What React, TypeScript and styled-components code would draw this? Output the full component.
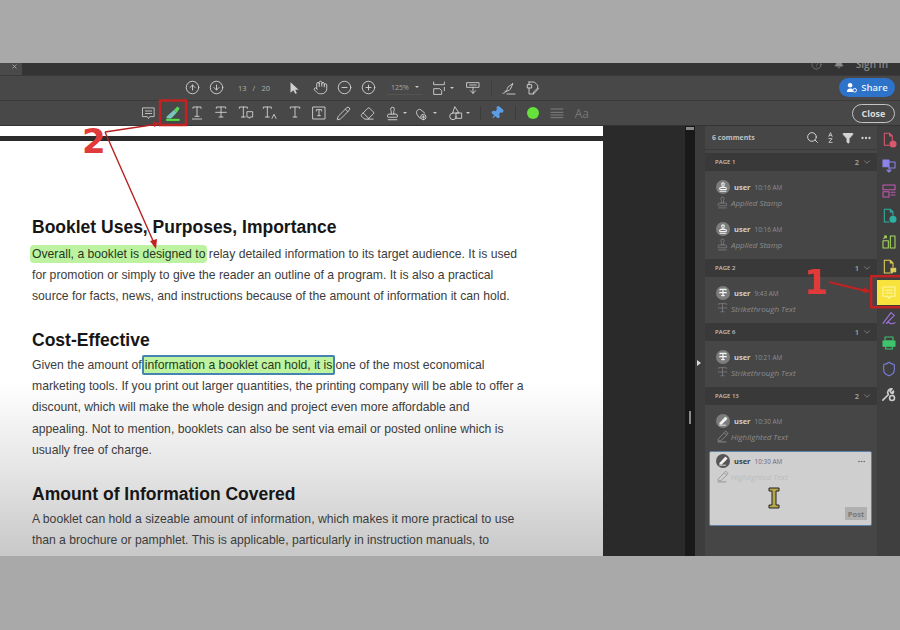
import React from "react";
import styled, { createGlobalStyle } from "styled-components";
import {
  Bell,
  ChevronDown,
  CircleArrowDown,
  CircleArrowUp,
  CircleHelp,
  CircleMinus,
  CirclePlus,
  Ellipsis,
  Eraser,
  Funnel,
  Hand,
  Pencil,
  Pin,
  Search,
  Shield,
  Stamp,
  X,
} from "lucide-react";

const GlobalStyle = createGlobalStyle`
  html, body {
    margin: 0;
    padding: 0;
    background: #a9a9a9;
  }
  body {
    width: 900px;
    height: 630px;
    overflow: hidden;
    font-family: "Open Sans", "Liberation Sans", sans-serif;
  }
`;

const Page = styled.div`
  position: relative;
  width: 900px;
  height: 630px;
  padding: 63px 0 74px;
  box-sizing: border-box;
  background: #a9a9a9;
`;

const Window = styled.div`
  height: 493px;
  display: flex;
  flex-direction: column;
  background: #444;
  overflow: hidden;
`;

const TitleBar = styled.div`
  height: 12px;
  background: #343434;
  display: flex;
  align-items: flex-start;
  flex-shrink: 0;
  color: #8a8a8a;
`;

const TabStub = styled.div`
  width: 22px;
  height: 12px;
  background: #4a4a4a;
  color: #ccc;
  display: flex;
  justify-content: flex-end;
  padding: 0 4px 0 0;
  box-sizing: border-box;
`;

const TitleRight = styled.div`
  margin-left: auto;
  margin-top: -8px;
  display: flex;
  align-items: center;
  gap: 12px;
  padding-right: 12px;
  font-size: 10px;
  font-weight: 600;
  height: 18px;
`;

const ToolRow = styled.div<{ $left: number; $lift?: boolean }>`
  height: 25px;
  flex-shrink: 0;
  display: flex;
  align-items: center;
  padding-left: ${(p) => p.$left}px;
  padding-right: 5px;
  padding-bottom: ${(p) => (p.$lift ? 1 : 0)}px;
  background: #484848;
  border-top: 1px solid #3a3a3a;
  box-sizing: border-box;
  color: #d8d8d8;
`;

const Slot = styled.div<{ $w?: number }>`
  width: ${(p) => p.$w ?? 24.4}px;
  height: 20px;
  flex-shrink: 0;
  display: flex;
  align-items: center;
  justify-content: center;
`;

const Caret = styled.span`
  width: 0;
  height: 0;
  margin-left: 3px;
  border-left: 2px solid transparent;
  border-right: 2px solid transparent;
  border-top: 2px solid #c8c8c8;
`;

const PageField = styled.div`
  width: 52px;
  height: 20px;
  flex-shrink: 0;
  display: flex;
  align-items: center;
  justify-content: center;
  gap: 6px;
  font-size: 7.5px;
  color: #b0b0b0;
`;

const ZoomField = styled.div`
  width: 36px;
  height: 15px;
  flex-shrink: 0;
  margin: 0 4px 0 7px;
  padding: 0 4px;
  box-sizing: border-box;
  display: flex;
  align-items: center;
  justify-content: space-between;
  font-size: 7px;
  color: #a6a6a6;
  border-bottom: 1px solid #545454;
`;

const Divider = styled.span<{ $l: number; $r: number }>`
  width: 1px;
  height: 14px;
  flex-shrink: 0;
  margin: 0 ${(p) => p.$r}px 0 ${(p) => p.$l}px;
  background: #3c3c3c;
`;

const ShareButton = styled.div`
  margin-left: auto;
  width: 56px;
  height: 19px;
  border-radius: 10px;
  background: #2d73c9;
  color: #e8f0fa;
  font-size: 9.5px;
  font-weight: 600;
  display: flex;
  align-items: center;
  justify-content: center;
  gap: 4px;
`;

const CloseButton = styled.div`
  margin-left: auto;
  width: 43px;
  height: 19px;
  border: 1px solid #c4c4c4;
  border-radius: 10px;
  box-sizing: border-box;
  color: #dcdcdc;
  font-size: 9px;
  font-weight: 700;
  display: flex;
  align-items: center;
  justify-content: center;
`;

const GreenDot = styled.span`
  width: 12px;
  height: 12px;
  border-radius: 50%;
  background: #66e03a;
`;

const AaLabel = styled.span`
  font-size: 12px;
  color: #777;
`;

const Main = styled.div`
  flex: 1;
  min-height: 0;
  display: flex;
  border-top: 1px solid #333;
`;

const Doc = styled.div`
  width: 603px;
  flex-shrink: 0;
  padding: 10px 0 0;
  box-sizing: border-box;
  overflow: hidden;
  font-family: "Liberation Sans", Arial, sans-serif;
  background: linear-gradient(
    to bottom,
    #fff 0,
    #fff 255px,
    #e8e8e8 335px,
    #c8c8c8 430px
  );
`;

const PageBreak = styled.div`
  height: 5px;
  background: #2b2b2b;
  margin-bottom: 76px;
`;

const DocBody = styled.div`
  padding-left: 32px;
`;

const Heading = styled.h2<{ $top?: number; $below?: number }>`
  margin: ${(p) => p.$top ?? 0}px 0 ${(p) => p.$below ?? 4}px;
  font-size: 17.5px;
  line-height: 21px;
  font-weight: 700;
  color: #161616;
  white-space: nowrap;
`;

const BodyLine = styled.p`
  margin: 0;
  height: 21.1px;
  font-size: 12.2px;
  line-height: 21px;
  color: #3c3c3c;
  white-space: nowrap;
`;

const Mark = styled.span`
  background: #bdf3a0;
  color: #26381c;
  border-radius: 4px;
  padding: 2px;
  margin: 0 -2px;
`;

const SelectedMark = styled.span`
  background: #c0f3a0;
  color: #26381c;
  border: 2px solid #4484b4;
  border-radius: 2px;
  padding: 1px;
`;

const Gutter = styled.div`
  width: 82px;
  flex-shrink: 0;
  background: #2a2a2a;
`;

const ScrollTrack = styled.div`
  width: 10px;
  flex-shrink: 0;
  background: #191919;
  display: flex;
  flex-direction: column;
  align-items: center;
`;

const ScrollThumb = styled.div`
  width: 8px;
  height: 3px;
  margin-top: 1px;
  background: #888;
`;

const ScrollMark = styled.div`
  width: 2px;
  height: 13px;
  margin-top: 281px;
  background: #8a8a8a;
`;

const PanelGap = styled.div`
  width: 10px;
  flex-shrink: 0;
  background: #3d3d3d;
  position: relative;
`;

const CollapseArrow = styled.span`
  position: absolute;
  left: 2px;
  top: 234px;
  width: 0;
  height: 0;
  border-top: 3px solid transparent;
  border-bottom: 3px solid transparent;
  border-left: 4px solid #d8d8d8;
`;

const Panel = styled.div`
  width: 172px;
  flex-shrink: 0;
  box-sizing: border-box;
  background: #464646;
`;

const PanelHead = styled.div`
  height: 24px;
  display: flex;
  align-items: center;
  padding: 0 2px 0 7px;
  color: #d4d4d4;
  border-bottom: 1px solid #3a3a3a;
  box-sizing: border-box;
`;

const PanelTitle = styled.span`
  font-size: 7px;
  font-weight: 700;
  color: #c0c0c0;
  margin-right: auto;
`;

const HeadIcon = styled.span`
  width: 18px;
  display: flex;
  justify-content: center;
`;

const Section = styled.div<{ $first?: boolean }>`
  height: 18px;
  margin-top: ${(p) => (p.$first ? 3 : 4)}px;
  background: #393939;
  display: flex;
  align-items: center;
  padding: 0 5px 0 10px;
  font-size: 6px;
  font-weight: 600;
  color: #c2c2c2;
`;

const Count = styled.span`
  margin-left: auto;
  margin-right: 3px;
  font-size: 7.5px;
  color: #a8a8a8;
`;

const Item = styled.div`
  height: 42px;
  padding: 7px 0 0 11px;
  box-sizing: border-box;
`;

const ItemTop = styled.div`
  display: flex;
  align-items: center;
  height: 18px;
  gap: 4px;
`;

const Avatar = styled.span<{ $dark?: boolean }>`
  width: 14px;
  height: 14px;
  border-radius: 50%;
  background: ${(p) => (p.$dark ? "#555" : "#7c7c7c")};
  color: #f4f4f4;
  display: flex;
  align-items: center;
  justify-content: center;
  flex-shrink: 0;
`;

const User = styled.span<{ $dark?: boolean }>`
  font-size: 7.5px;
  font-weight: 700;
  color: ${(p) => (p.$dark ? "#3c3c3c" : "#cfcfcf")};
`;

const Time = styled.span<{ $dark?: boolean }>`
  font-size: 6.4px;
  color: ${(p) => (p.$dark ? "#6a6a88" : "#8e8e8e")};
`;

const ItemBody = styled.div<{ $dark?: boolean }>`
  display: flex;
  align-items: center;
  height: 14px;
  margin-top: -1px;
  gap: 2px;
  color: ${(p) => (p.$dark ? "#9a9a9a" : "#858585")};
`;

const Summary = styled.span<{ $dark?: boolean }>`
  font-size: 8px;
  font-style: italic;
  color: ${(p) => (p.$dark ? "#bcbcbc" : "#8c8c8c")};
`;

const ActiveCard = styled.div`
  position: relative;
  height: 75px;
  margin: 4px 5px 0 4px;
  padding: 0 0 0 6px;
  box-sizing: border-box;
  background: #cfcfcf;
  border: 1px solid #5f83a8;
  border-radius: 2px;
`;

const CardMenu = styled.span`
  margin-left: auto;
  margin-right: 5px;
  color: #666;
  display: flex;
`;

const PostButton = styled.span`
  position: absolute;
  right: 4px;
  bottom: 5px;
  width: 22px;
  height: 13px;
  background: #b0b0b0;
  color: #787878;
  font-size: 7.5px;
  font-weight: 700;
  display: flex;
  align-items: center;
  justify-content: center;
`;

const Cursor = styled.svg`
  position: absolute;
  left: 58px;
  top: 35px;
`;

const Rail = styled.div`
  flex: 1;
  display: flex;
  flex-direction: column;
  align-items: center;
  padding-top: 1.5px;
  background: #3f3f3f;
`;

const RailSlot = styled.div<{ $active?: boolean }>`
  width: 100%;
  height: 25.4px;
  flex-shrink: 0;
  display: flex;
  align-items: center;
  justify-content: center;
  background: ${(p) => (p.$active ? "#f7e33c" : "transparent")};
`;

const Overlay = styled.svg`
  position: absolute;
  inset: 0;
  pointer-events: none;
`;

const Callout = styled.span<{ $x: number; $y: number }>`
  position: absolute;
  left: ${(p) => p.$x}px;
  top: ${(p) => p.$y}px;
  font-family: "DejaVu Sans", "Liberation Sans", sans-serif;
  font-size: 34px;
  line-height: 34px;
  font-weight: 700;
  color: #e03a3a;
`;

const Glyph = ({
  size = 16,
  color = "currentColor",
  sw = 1.3,
  children,
}: {
  size?: number;
  color?: string;
  sw?: number;
  children: React.ReactNode;
}) => (
  <svg
    width={size}
    height={size}
    viewBox="0 0 24 24"
    fill="none"
    stroke={color}
    strokeWidth={sw}
    strokeLinecap="round"
    strokeLinejoin="round"
  >
    {children}
  </svg>
);

const tBar = "M5 5V3h14v2M12 3v15M9 18h6";

const HighlighterIcon = () => (
  <svg width="17" height="17" viewBox="0 0 24 24">
    <path d="M3 17 14 7l4 4-8 8H5z" fill="#79c4bc" />
    <path d="M14 7l5-5 3 3-4 6z" fill="#58d85a" />
    <rect x="3" y="19.5" width="19" height="3" fill="#55dd44" />
  </svg>
);

const SmallHighlighter = ({ size = 10, fill }: { size?: number; fill?: boolean }) => (
  <svg width={size} height={size} viewBox="0 0 24 24" fill={fill ? "currentColor" : "none"} stroke="currentColor" strokeWidth={fill ? 1 : 1.8} strokeLinejoin="round">
    <path d="M4 17 15 5l5 4L9 20H4zM15 5l3-3 4 4-2 3" />
    <path d="M3 22h16" fill="none" strokeWidth="2" />
  </svg>
);

const StrikeGlyph = ({ size = 15, sw = 1.3 }: { size?: number; sw?: number }) => (
  <Glyph size={size} sw={sw}>
    <path d={tBar} />
    <path d="M4 11h16" />
  </Glyph>
);

const Arrow = () => (
  <svg width="14" height="16" viewBox="0 0 24 24" fill="#d0d0d0">
    <path d="M6 2v18l5-4 3 6 3-1-3-6h6z" />
  </svg>
);

type Entry = { page?: string; count?: number; kind: "stamp" | "strike" | "high"; time: string; text: string };

const entries: Entry[] = [
  { page: "PAGE 1", count: 2, kind: "stamp", time: "10:16 AM", text: "Applied Stamp" },
  { kind: "stamp", time: "10:16 AM", text: "Applied Stamp" },
  { page: "PAGE 2", count: 1, kind: "strike", time: "9:43 AM", text: "Strikethrough Text" },
  { page: "PAGE 6", count: 1, kind: "strike", time: "10:21 AM", text: "Strikethrough Text" },
  { page: "PAGE 13", count: 2, kind: "high", time: "10:30 AM", text: "Highlighted Text" },
];

const KindIcon = ({ kind, size, bold }: { kind: Entry["kind"]; size: number; bold?: boolean }) => {
  if (kind === "stamp") return <Stamp size={size} strokeWidth={bold ? 2.6 : 1.4} />;
  if (kind === "strike") return <StrikeGlyph size={size} sw={bold ? 3 : 1.3} />;
  return <SmallHighlighter size={size} fill={bold} />;
};

const CommentItem = ({ e }: { e: Entry }) => (
  <Item>
    <ItemTop>
      <Avatar>
        <KindIcon kind={e.kind} size={10} bold />
      </Avatar>
      <User>user</User>
      <Time>{e.time}</Time>
    </ItemTop>
    <ItemBody>
      <KindIcon kind={e.kind} size={13} />
      <Summary>{e.text}</Summary>
    </ItemBody>
  </Item>
);

const railIcons: { color: string; active?: boolean; node: React.ReactNode }[] = [
  {
    color: "#d9596f",
    node: (
      <>
        <path d="M5 2h8l4 4v6M5 2v18h7M13 2v4h4" />
        <circle cx="18" cy="18" r="4.5" fill="#d9596f" />
      </>
    ),
  },
  {
    color: "#8b84ea",
    node: (
      <>
        <path d="M3 3h9v10H3z" fill="#8b84ea" />
        <path d="M12 6h9v9h-9M12 13v8M9 18l3 3 3-3" />
      </>
    ),
  },
  { color: "#c25ab4", node: <path d="M3 3h18v7H3zM3 13h9v8H3zM15 14h6M15 18h6" /> },
  {
    color: "#2fb0a4",
    node: (
      <>
        <path d="M5 2h9l4 4v5M5 2v19h7M14 2v4h4" />
        <circle cx="18" cy="17" r="4.5" fill="#2fb0a4" />
      </>
    ),
  },
  { color: "#a5d85f", node: <path d="M3 10h8v11H3zM14 3h7v18h-7zM4 7l4-4M8 3H5M8 3v3" /> },
  {
    color: "#e2cf58",
    node: (
      <>
        <path d="M5 2h9l4 4v6M5 2v19h8M14 2v4h4" />
        <path d="M15 14h7v5h-4l-2 2h-1z" fill="#e2cf58" />
      </>
    ),
  },
  { color: "#fff6a8", active: true, node: <path d="M3 3h18v14h-7l-2 3-2-3H3zM7 8h10M7 12h10" /> },
  { color: "#a276e6", node: <path d="M3 20 15 4l5 4L8 20c3-2 5-1 6 0s3 1 7-1" /> },
  {
    color: "#3fc46c",
    node: (
      <>
        <path d="M6 3h12v6H6z" />
        <path d="M3 9h18v8H3z" fill="#3fc46c" />
        <path d="M7 14h10v7H7z" />
      </>
    ),
  },
];

const App = () => (
  <Page>
    <GlobalStyle />
    <Window>
      <TitleBar>
        <TabStub><X size={7} strokeWidth={2} /></TabStub>
        <TitleRight>
          <CircleHelp size={11} strokeWidth={1.4} />
          <Bell size={10} fill="#8a8a8a" />
          <span>Sign In</span>
        </TitleRight>
      </TitleBar>

      <ToolRow $left={180} $lift>
        <Slot $w={24}><CircleArrowUp size={15} strokeWidth={1.4} /></Slot>
        <Slot $w={24}><CircleArrowDown size={15} strokeWidth={1.4} /></Slot>
        <PageField><span>13</span><span>/</span><span>20</span></PageField>
        <Slot $w={28}><Arrow /></Slot>
        <Slot $w={24}><Hand size={15} strokeWidth={1.4} /></Slot>
        <Slot $w={24}><CircleMinus size={15} strokeWidth={1.4} /></Slot>
        <Slot $w={24}><CirclePlus size={15} strokeWidth={1.4} /></Slot>
        <ZoomField><span>125%</span><Caret /></ZoomField>
        <Slot $w={30}>
          <Glyph size={16}>
            <path d="M4 3v4h16V3M4 21v-8h9l3 3v5zM20 11v5" />
          </Glyph>
          <Caret />
        </Slot>
        <Slot $w={32}>
          <Glyph size={16}>
            <path d="M3 4h18v7H3zM12 11v9M8 16l4 4 4-4M7 7.5h10" />
          </Glyph>
        </Slot>
        <Divider $l={2} $r={5} />
        <Slot $w={24}>
          <Glyph size={16}>
            <path d="M3 20c4 0 6-4 7-9l8-6-4 9c-2 2-5 3-8 3M9 21h12" />
          </Glyph>
        </Slot>
        <Slot $w={24}>
          <Glyph size={16}>
            <path d="M6 3h8l5 5v3M6 3v4M4 7h6v5H4zM6 12v9h6M20 13l-6 7-2 1 1-3 6-6z" />
          </Glyph>
        </Slot>
        <ShareButton>
          <svg width="11" height="11" viewBox="0 0 24 24" fill="#fff">
            <circle cx="9" cy="7" r="5" />
            <path d="M2 22c0-6 3-8 7-8s5 1 6 3v5z" />
            <circle cx="19" cy="18" r="4" fill="none" stroke="#fff" strokeWidth="2" />
          </svg>
          Share
        </ShareButton>
      </ToolRow>

      <ToolRow $left={136}>
        <Slot>
          <Glyph size={15}>
            <path d="M3 3h18v14h-7l-2 3-2-3H3zM7 8h10M7 12h10" />
          </Glyph>
        </Slot>
        <Slot><HighlighterIcon /></Slot>
        <Slot>
          <Glyph>
            <path d="M6 5V3h12v2M12 3v14M9 17h6M5 21h14" />
          </Glyph>
        </Slot>
        <Slot><StrikeGlyph size={16} /></Slot>
        <Slot>
          <Glyph>
            <path d="M2 5V3h12v2M8 3v15M5 18h6M14 10h8v8h-4l-1 2-1-2h-2z" />
          </Glyph>
        </Slot>
        <Slot>
          <Glyph>
            <path d="M2 5V3h12v2M8 3v15M5 18h6M15 20l3-6 3 6" />
          </Glyph>
        </Slot>
        <Slot><Glyph><path d={tBar} /></Glyph></Slot>
        <Slot>
          <Glyph>
            <path d="M3 3h18v18H3zM8 9V7h8v2M12 7v9M10 16h4" />
          </Glyph>
        </Slot>
        <Slot><Pencil size={15} strokeWidth={1.4} /></Slot>
        <Slot><Eraser size={15} strokeWidth={1.4} /></Slot>
        <Slot $w={32}><Stamp size={15} strokeWidth={1.4} /><Caret /></Slot>
        <Slot $w={28}>
          <Glyph>
            <path d="M9 20 5 15c-3-4 0-10 5-8l6 5M14 22a4 4 0 1 0 0-8 4 4 0 0 0 0 8zM14 16v4M12 18h4" />
          </Glyph>
          <Caret />
        </Slot>
        <Slot $w={38}>
          <Glyph>
            <path d="M12 3l6 9H9zM9 12a5 5 0 1 0 5 5M14 12h8v8h-8z" />
          </Glyph>
          <Caret />
        </Slot>
        <Divider $l={2} $r={4} />
        <Slot $w={24}><Pin size={14} fill="#5b9ee6" color="#5b9ee6" style={{ transform: "rotate(40deg)" }} /></Slot>
        <Divider $l={6} $r={6} />
        <Slot $w={22}><GreenDot /></Slot>
        <Slot $w={26}>
          <Glyph color="#888">
            <path d="M3 6h18M3 11h18M3 15h18M3 19h18" />
          </Glyph>
        </Slot>
        <Slot $w={24}><AaLabel>Aa</AaLabel></Slot>
        <CloseButton>Close</CloseButton>
      </ToolRow>

      <Main>
        <Doc>
          <PageBreak />
          <DocBody>
            <Heading $below={6}>Booklet Uses, Purposes, Importance</Heading>
            <BodyLine>
              <Mark>Overall, a booklet is designed to</Mark> relay detailed information to its target audience. It is used
            </BodyLine>
            <BodyLine>for promotion or simply to give the reader an outline of a program. It is also a practical</BodyLine>
            <BodyLine>source for facts, news, and instructions because of the amount of information it can hold.</BodyLine>
            <Heading $top={23}>Cost-Effective</Heading>
            <BodyLine>
              Given the amount of<SelectedMark>information a booklet can hold, it is</SelectedMark>one of the most economical
            </BodyLine>
            <BodyLine>marketing tools. If you print out larger quantities, the printing company will be able to offer a</BodyLine>
            <BodyLine>discount, which will make the whole design and project even more affordable and</BodyLine>
            <BodyLine>appealing. Not to mention, booklets can also be sent via email or posted online which is</BodyLine>
            <BodyLine>usually free of charge.</BodyLine>
            <Heading $top={23}>Amount of Information Covered</Heading>
            <BodyLine>A booklet can hold a sizeable amount of information, which makes it more practical to use</BodyLine>
            <BodyLine>than a brochure or pamphlet. This is applicable, particularly in instruction manuals, to</BodyLine>
          </DocBody>
        </Doc>
        <Gutter />
        <ScrollTrack>
          <ScrollThumb />
          <ScrollMark />
        </ScrollTrack>
        <PanelGap>
          <CollapseArrow />
        </PanelGap>
        <Panel>
          <PanelHead>
            <PanelTitle>6 comments</PanelTitle>
            <HeadIcon><Search size={13} strokeWidth={1.8} /></HeadIcon>
            <HeadIcon>
              <Glyph size={13} sw={1.5}>
                <path d="M9 10l3-7 3 7M10 8h4M9 14h6l-6 7h6" />
              </Glyph>
            </HeadIcon>
            <HeadIcon><Funnel size={12} fill="#d4d4d4" /></HeadIcon>
            <HeadIcon><Ellipsis size={12} strokeWidth={2.6} /></HeadIcon>
          </PanelHead>
          {entries.map((e, i) => (
            <React.Fragment key={i}>
              {e.page && (
                <Section $first={i === 0}>
                  {e.page}
                  <Count>{e.count}</Count>
                  <ChevronDown size={10} color="#8a8a8a" />
                </Section>
              )}
              <CommentItem e={e} />
            </React.Fragment>
          ))}
          <ActiveCard>
            <ItemTop>
              <Avatar $dark><SmallHighlighter size={10} fill /></Avatar>
              <User $dark>user</User>
              <Time $dark>10:30 AM</Time>
              <CardMenu><Ellipsis size={9} /></CardMenu>
            </ItemTop>
            <ItemBody $dark>
              <SmallHighlighter size={13} />
              <Summary $dark>Highlighted Text</Summary>
            </ItemBody>
            <Cursor width="12" height="22" viewBox="0 0 12 22">
              <path d="M1 1h10v3H8v14h3v3H1v-3h3V4H1z" fill="#b5a74a" stroke="#222" strokeWidth="1" />
            </Cursor>
            <PostButton>Post</PostButton>
          </ActiveCard>
        </Panel>
        <Rail>
          {railIcons.map((r, i) => (
            <RailSlot key={i} $active={r.active}>
              <Glyph size={16} color={r.color} sw={1.6}>{r.node}</Glyph>
            </RailSlot>
          ))}
          <RailSlot><Shield size={16} color="#7f7fe0" strokeWidth={1.6} /></RailSlot>
          <RailSlot>
            <Glyph size={17} color="#cfcfcf" sw={2.2}>
              <path d="M4 20l8-8M12 12a5 5 0 0 1 5-8l-3 3 2 3 3-3a5 5 0 0 1-1 4" />
              <circle cx="17" cy="17" r="3.5" />
            </Glyph>
          </RailSlot>
        </Rail>
      </Main>
    </Window>

    <Overlay width="900" height="630" viewBox="0 0 900 630">
      <rect x="160" y="100.5" width="26" height="24.5" fill="none" stroke="#c22222" strokeWidth="2.5" />
      <rect x="871.2" y="276.2" width="34" height="31" fill="none" stroke="#c22222" strokeWidth="2.5" />
      <path d="M105 132 158 124M105 132 154 243" stroke="#b82020" strokeWidth="1.4" fill="none" />
      <path d="M829 282 866 291" stroke="#c22222" strokeWidth="2" fill="none" />
      <path d="M160 124 153 121 154 127zM156 249 150 241 157 239zM871 292 864 287 863 293z" fill="#c22222" />
    </Overlay>
    <Callout $x={82} $y={124}>2</Callout>
    <Callout $x={804} $y={265}>1</Callout>
  </Page>
);

export default App;
